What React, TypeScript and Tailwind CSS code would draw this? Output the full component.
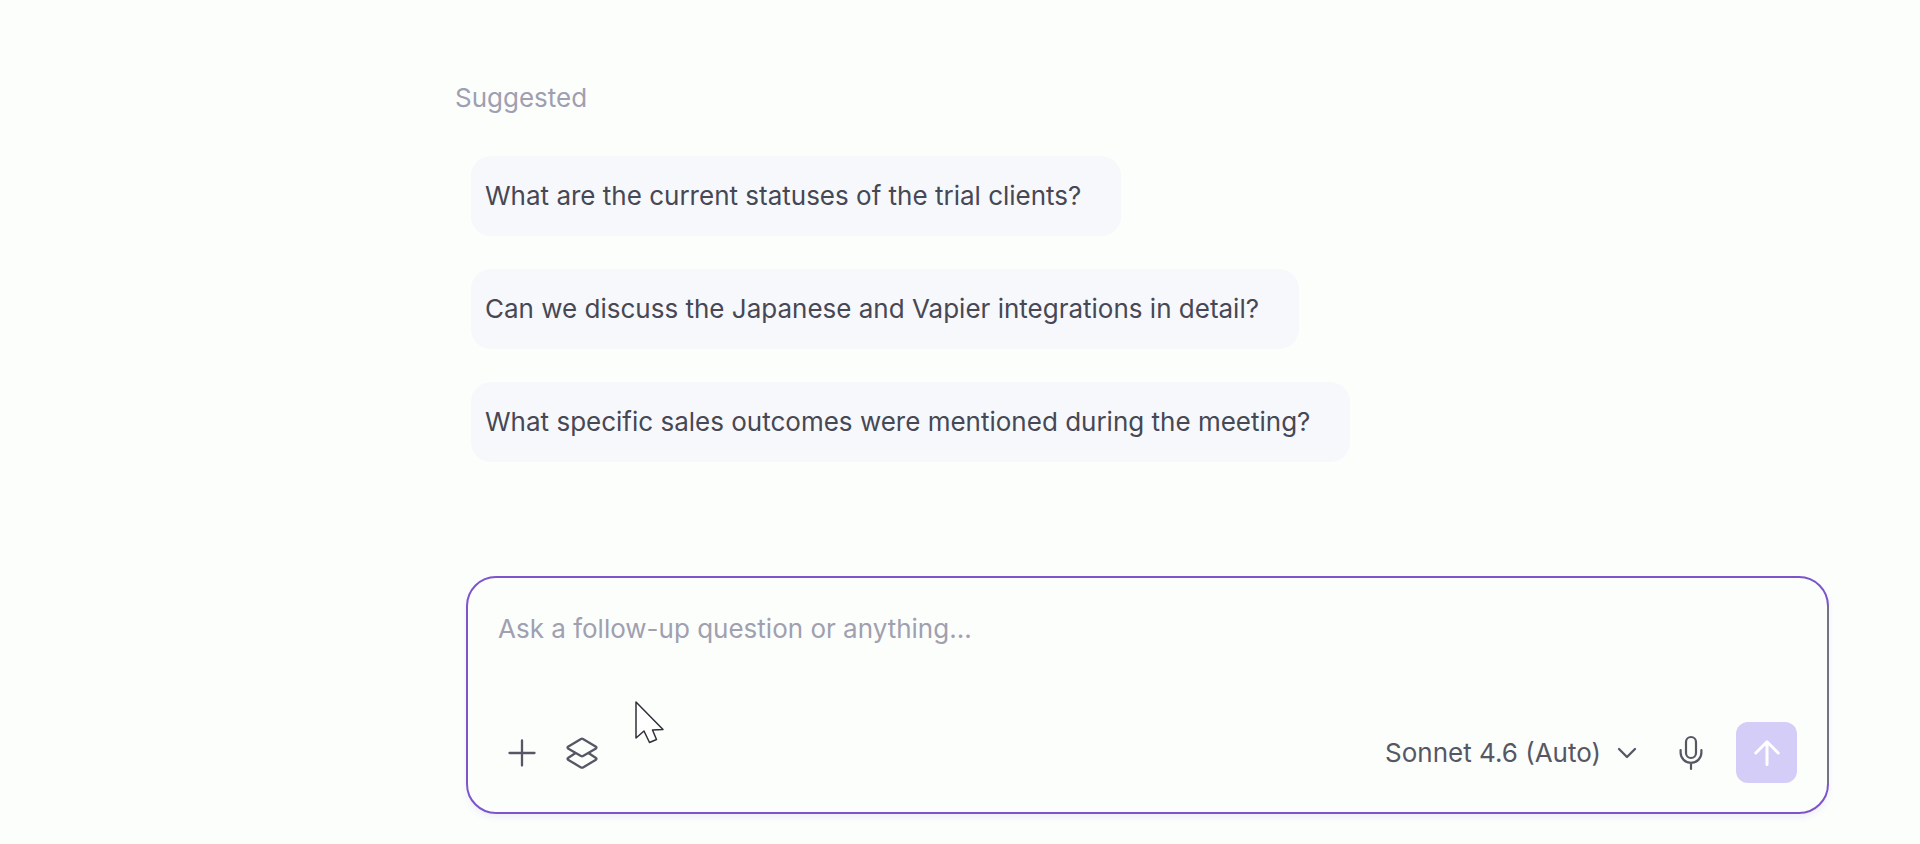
import { useState } from 'react'

const suggestions = [
  'What are the current statuses of the trial clients?',
  'Can we discuss the Japanese and Vapier integrations in detail?',
  'What specific sales outcomes were mentioned during the meeting?',
]

function PlusIcon() {
  return (
    <svg width="28" height="28" viewBox="0 0 28 28" fill="none" stroke="currentColor" strokeWidth="2.3" strokeLinecap="round" aria-hidden="true">
      <path d="M14 1.500v25M1.500 14h25" />
    </svg>
  )
}

function LayersIcon() {
  return (
    <svg width="34" height="34" viewBox="0 0 34 34" fill="none" stroke="currentColor" strokeWidth="2.3" strokeLinejoin="round" strokeLinecap="round" aria-hidden="true">
      <path d="M16 2.900a2 2 0 0 1 2 0L31 10.700a1 1 0 0 1 0 1.700L18 20a2 2 0 0 1-2 0L3 12.400a1 1 0 0 1 0-1.700z" />
      <path d="M10.200 17.300L3 22a1 1 0 0 0 0 1.700L16 31.400a2 2 0 0 0 2 0l13-7.700a1 1 0 0 0 0-1.700L23.800 17.300" />
    </svg>
  )
}

function ChevronIcon() {
  return (
    <svg className="pointer-events-none" width="20" height="12" viewBox="0 0 20 12" fill="none" stroke="currentColor" strokeWidth="2.3" strokeLinecap="round" strokeLinejoin="round" aria-hidden="true">
      <path d="M2 2l8 8 8-8" />
    </svg>
  )
}

function MicIcon() {
  return (
    <svg width="26" height="36" viewBox="0 0 26 36" fill="none" stroke="currentColor" strokeWidth="2.2" strokeLinecap="round" aria-hidden="true">
      <rect x="8" y="2" width="10" height="21" rx="5" />
      <path d="M2.600 15v2.500a10.400 10.400 0 0 0 20.800 0V15M13 28v6" />
    </svg>
  )
}

function ArrowUpIcon() {
  return (
    <svg width="28" height="28" viewBox="0 0 28 28" fill="none" stroke="currentColor" strokeWidth="3" strokeLinecap="round" strokeLinejoin="round" aria-hidden="true">
      <path d="M14 25.500V3M2.800 14L14 2.800 25.200 14" />
    </svg>
  )
}

export default function App() {
  const [text, setText] = useState('')
  const [model, setModel] = useState('auto')

  return (
    <div className="min-h-screen bg-[#fcfefc] pt-[82px] pr-[91px] pb-[30px] pl-[455px] font-['Inter',sans-serif] text-[26px] leading-8 text-[#464855]">
      <h2 className="text-[#9f9fb1]">Suggested</h2>

      <ul className="mt-[42px] ml-4 flex flex-col items-start gap-[33px]">
        {suggestions.map((s) => (
          <li key={s}>
            <button
              type="button"
              onClick={() => setText(s)}
              className="rounded-[20px] bg-[#f7f8fb] py-6 pr-10 pl-3.5 text-left"
            >
              {s}
            </button>
          </li>
        ))}
      </ul>

      <form
        onSubmit={(e) => e.preventDefault()}
        className="relative mt-[114px] ml-[11px] rounded-[30px] border-2 border-[#7c54cc] px-[30px] pt-[35px] pb-[29px] shadow-[0_4px_6px_rgba(120,80,200,0.08)]"
      >
        <span className="absolute top-7 -right-0.5 bottom-7 w-0.5 bg-[#74737f]" />
        <textarea
          aria-label="Ask a follow-up question"
          placeholder="Ask a follow-up question or anything..."
          value={text}
          onChange={(e) => setText(e.target.value)}
          rows={2}
          className="block w-full resize-none bg-transparent outline-none placeholder:text-[#a0a0b0]"
        />

        <div className="mt-[45px] flex items-center justify-between text-[#565765]">
          <div className="flex items-center gap-3">
            <button type="button" aria-label="Add attachment" className="flex size-12 items-center justify-center">
              <PlusIcon />
            </button>
            <button type="button" aria-label="Choose sources" className="flex size-12 items-center justify-center">
              <LayersIcon />
            </button>
          </div>

          <div className="flex items-center">
            <div className="flex items-center gap-4">
              <select
                aria-label="Model"
                value={model}
                onChange={(e) => setModel(e.target.value)}
                className="appearance-none bg-transparent outline-none"
              >
                <option value="auto">Sonnet 4.6 (Auto)</option>
              </select>
              <ChevronIcon />
            </div>
            <button type="button" aria-label="Dictate" className="ml-[30px] flex size-12 items-center justify-center">
              <MicIcon />
            </button>
            <button
              type="submit"
              aria-label="Send"
              className="ml-[21px] flex size-[61px] items-center justify-center rounded-xl bg-[#d4cdf8] text-white"
            >
              <ArrowUpIcon />
            </button>
          </div>
        </div>

        {/* mouse pointer */}
        <svg className="pointer-events-none absolute top-[122px] left-[166px]" width="32" height="46" viewBox="0 0 32 46" fill="#fff" stroke="#30303a" strokeWidth="1.5" strokeLinejoin="round" aria-hidden="true">
          <path d="M2 2V38L10 31 15.500 42.500 22.500 39.500 18.500 30 29 29.500z" />
        </svg>
      </form>
    </div>
  )
}
